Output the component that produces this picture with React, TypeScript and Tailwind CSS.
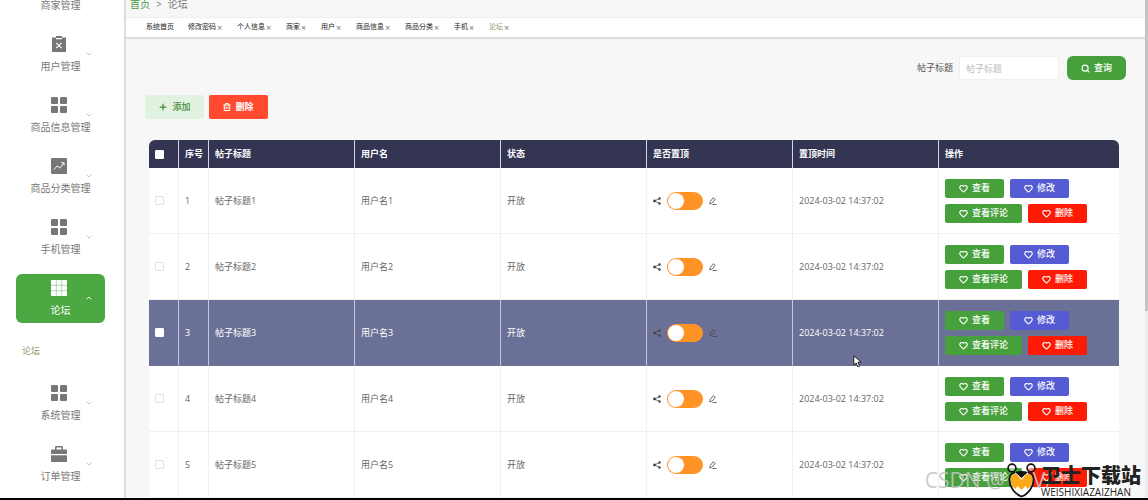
import clsx from "clsx";
import { ChevronDown, ChevronUp, Heart, Plus, Search } from "lucide-react";
import { useState, type ReactNode } from "react";

type IconName = "clipboard" | "grid" | "trend" | "table" | "case";

interface MenuItem {
	label: string;
	icon: IconName;
	children?: string[];
}

const MENU: MenuItem[] = [
	{ label: "商家管理", icon: "grid" },
	{ label: "用户管理", icon: "clipboard" },
	{ label: "商品信息管理", icon: "grid" },
	{ label: "商品分类管理", icon: "trend" },
	{ label: "手机管理", icon: "grid" },
	{ label: "论坛", icon: "table", children: ["论坛"] },
	{ label: "系统管理", icon: "grid" },
	{ label: "订单管理", icon: "case" },
];

const TABS = ["系统首页", "修改密码", "个人信息", "商家", "用户", "商品信息", "商品分类", "手机", "论坛"];

const ROWS = [1, 2, 3, 4, 5].map((id) => ({
	id,
	title: `帖子标题${id}`,
	user: `用户名${id}`,
	status: "开放",
	time: "2024-03-02 14:37:02",
}));

const HEADERS = ["序号", "帖子标题", "用户名", "状态", "是否置顶", "置顶时间", "操作"];

function MenuIcon({ name }: { name: IconName }) {
	return (
		<svg viewBox="0 0 16 16" className="h-4 w-4" fill="currentColor" aria-hidden="true">
			{name === "grid" && (
				<>
					<rect x="0" y="0" width="7" height="7" rx="1" />
					<rect x="9" y="0" width="7" height="7" rx="1" />
					<rect x="0" y="9" width="7" height="7" rx="1" />
					<rect x="9" y="9" width="7" height="7" rx="1" />
				</>
			)}
			{name === "clipboard" && (
				<>
					<path d="M1 1.5h4V0h6v1.5h4V16H1z" />
					<path d="M5 2.6h6M5.2 6.8l5.4 5.4M10.6 6.8l-5.4 5.4" stroke="#fff" strokeWidth="1.1" />
				</>
			)}
			{name === "trend" && (
				<>
					<rect width="16" height="16" rx="1" />
					<path
						d="M3 11.5l3.2-3.6 2.6 2.2 4-5M10.2 4.6l2.8.2.2 2.6"
						stroke="#fff"
						strokeWidth="1"
						fill="none"
					/>
				</>
			)}
			{name === "table" && (
				<>
					<rect width="16" height="16" />
					<path d="M5.3 0v16M10.7 0v16M0 5.3h16M0 10.7h16" stroke="#9fcf98" strokeWidth="0.8" />
				</>
			)}
			{name === "case" && (
				<>
					<path d="M4 3.5V1.2C4 .5 4.5 0 5.2 0h5.6c.7 0 1.2.5 1.2 1.2v2.3h3c.6 0 1 .4 1 1V8H0V4.5c0-.6.4-1 1-1zm1.5 0h5v-2h-5z" />
					<path d="M0 9.2h16V15c0 .6-.4 1-1 1H1c-.6 0-1-.4-1-1z" />
				</>
			)}
		</svg>
	);
}

function Sidebar() {
	return (
		<aside className="w-[126px] shrink-0 overflow-hidden border-r-2 border-[#dcdcdc] bg-white">
			<ul className="-mt-[31px] px-4 text-[10px]">
				{MENU.map((item) => {
					const open = !!item.children;
					const Chevron = open ? ChevronUp : ChevronDown;
					return (
						<li key={item.label} className={clsx(!open && "pb-3")}>
							<button
								type="button"
								className={clsx(
									"relative flex h-[49px] w-[89px] flex-col items-center gap-2 rounded-md pt-1.5",
									open ? "bg-[#4ca843] text-white" : "text-[#777]",
								)}
							>
								<span className="pr-1">
									<MenuIcon name={item.icon} />
								</span>
								<span className="leading-3 whitespace-nowrap">{item.label}</span>
								<Chevron
									className={clsx("absolute top-5 right-3 h-2 w-2", !open && "text-[#aaa]")}
									strokeWidth={open ? 3 : 2}
								/>
							</button>
							{item.children?.map((child) => (
								<a
									key={child}
									href="#forum"
									className="flex h-14 items-center pl-1.5 text-[9px] text-[#8a9a70]"
								>
									{child}
								</a>
							))}
						</li>
					);
				})}
			</ul>
		</aside>
	);
}

function TopBar() {
	return (
		<header>
			<nav className="flex h-[17px] gap-1.5 px-1 text-[10px] leading-2 text-[#777]">
				<a href="#home" className="text-[#4b9a44]">
					首页
				</a>
				<span>&gt;</span>
				<span>论坛</span>
			</nav>
			<nav className="flex h-[22px] items-center gap-3.5 border-t border-b-2 border-t-[#eee] border-b-[#dcdcdc] bg-white px-5 text-[7px] text-[#222]">
				{TABS.map((tab, i) => (
					<a
						key={tab}
						href={`#tab-${i}`}
						className={clsx(
							"flex items-center whitespace-nowrap",
							i === TABS.length - 1 && "text-[#8a9a70]",
						)}
					>
						{tab}
						{i > 0 && (
							<span className="w-[7px] text-center text-[9px] leading-none text-[#777]">×</span>
						)}
					</a>
				))}
			</nav>
		</header>
	);
}

function TrashIcon() {
	return (
		<svg viewBox="0 0 16 16" className="h-2 w-2" fill="none" stroke="currentColor" strokeWidth="2" aria-hidden="true">
			<path d="M1 4h14M5 4V1h6v3M2.5 4v11h11V4M6 7v5M10 7v5" />
		</svg>
	);
}

function ShareIcon() {
	return (
		<svg viewBox="0 0 16 16" className="h-2 w-2" fill="currentColor" aria-hidden="true">
			<path d="M13 3L3 8l10 5" fill="none" stroke="currentColor" strokeWidth="1.5" />
			<circle cx="13" cy="3" r="2.5" />
			<circle cx="3" cy="8" r="2.8" />
			<circle cx="13" cy="13" r="2.5" />
		</svg>
	);
}

function EditIcon() {
	return (
		<svg viewBox="0 0 16 16" className="h-2 w-2" fill="none" stroke="currentColor" strokeWidth="1.6" aria-hidden="true">
			<path d="M1.5 14l1-5L8.500 1.500l4 3L6.500 12zM7 15h8.500" />
		</svg>
	);
}

function ActionButton({ className, children }: { className: string; children: ReactNode }) {
	return (
		<button
			type="button"
			className={clsx(
				"flex h-[19px] items-center gap-1 rounded-xs px-3.5 font-medium whitespace-nowrap text-white",
				className,
			)}
		>
			<Heart className="h-[9px] w-[9px]" strokeWidth={3} />
			{children}
		</button>
	);
}

function CheckBox({ label, solid }: { label: string; solid: boolean }) {
	return (
		<input
			type="checkbox"
			aria-label={label}
			className={clsx(
				"block h-[9px] w-[9px] appearance-none rounded-[1px] border bg-white checked:bg-[#4ca843]",
				solid ? "border-white" : "border-[#e2e2e2]",
			)}
		/>
	);
}

function PinSwitch({ label }: { label: string }) {
	const [pinned, setPinned] = useState(false);
	return (
		<input
			type="checkbox"
			role="switch"
			aria-label={label}
			checked={pinned}
			onChange={(e) => setPinned(e.target.checked)}
			className="flex h-[18px] w-9 appearance-none rounded-full bg-[#ff9326] p-px before:h-4 before:w-4 before:rounded-full before:bg-white checked:justify-end"
		/>
	);
}

function PostTable() {
	return (
		<div className="mt-[21px] mr-[7px] ml-1 overflow-hidden rounded-t-md bg-white">
			<table className="w-full table-fixed border-separate border-spacing-0 text-left text-[9px] text-[#666]">
				<colgroup>
					<col className="w-[30px]" />
					<col className="w-[30px]" />
					<col />
					<col />
					<col />
					<col />
					<col />
					<col className="w-[180px]" />
				</colgroup>
				<thead>
					<tr className="h-7 bg-[#333552] text-white">
						<th className="border-r border-[#d5d6e4] px-1.5">
							<CheckBox label="全选" solid />
						</th>
						{HEADERS.map((h) => (
							<th
								key={h}
								className="border-r border-[#d5d6e4] pl-1.5 font-bold whitespace-nowrap last:border-r-0"
							>
								{h}
							</th>
						))}
					</tr>
				</thead>
				<tbody>
					{ROWS.map((row) => {
						const active = row.id === 3;
						const cell = clsx(
							"border-r border-b pl-1.5",
							active ? "border-r-[#c5c8dc] border-b-[#6b7196]" : "border-[#f0f0f0]",
						);
						return (
							<tr key={row.id} className={clsx("h-[66px]", active && "bg-[#6b7196] text-white")}>
								<td className={cell}>
									<CheckBox label={`选择 ${row.title}`} solid={active} />
								</td>
								<td className={cell}>{row.id}</td>
								<td className={cell}>{row.title}</td>
								<td className={cell}>{row.user}</td>
								<td className={cell}>{row.status}</td>
								<td className={cell}>
									<div className="flex items-center gap-1.5 text-[#444]">
										<ShareIcon />
										<PinSwitch label={`置顶 ${row.title}`} />
										<EditIcon />
									</div>
								</td>
								<td className={cell}>{row.time}</td>
								<td className={clsx(cell, "border-r-0")}>
									<div className="flex flex-wrap gap-1.5">
										<ActionButton className="bg-[#46a13c]">查看</ActionButton>
										<ActionButton className="bg-[#555bd2]">修改</ActionButton>
										<ActionButton className="bg-[#46a13c]">查看评论</ActionButton>
										<ActionButton className="bg-[#fd1b05]">删除</ActionButton>
									</div>
								</td>
							</tr>
						);
					})}
				</tbody>
			</table>
		</div>
	);
}

function SiteMark() {
	return (
		<div className="pointer-events-none absolute right-[7px] bottom-0 flex items-end">
			<div className="absolute right-[88px] bottom-1.5 flex gap-7 text-[21px] leading-6 whitespace-nowrap text-[#c4c4c4]/90">
				<span>CSDN @</span>
				<span>V/</span>
			</div>
			<svg viewBox="0 0 30 36" className="relative h-9 w-[30px]" aria-hidden="true">
				<path d="M2.5 17C3 12 8 10 14.5 10S26 12 26.500 17c.5 7-5 15-12 17.500C7.500 32 2 24 2.500 17z" fill="#fff" />
				<path d="M3.5 16c1-4 4-5 6-4l5 6 5-6c2-1 5 0 6 4 .5 5-2 9-5 11l-2-3-4 4-4-4-2 3c-3-2-5.500-6-5-11z" fill="#fba919" />
				<path d="M8 10c4-1.500 9-1.500 13 0l-6.500 6z" fill="#111" />
				<path
					d="M8 10.500C4 11.500 2.500 14 2.500 17c-.5 7 5 15 12 17.500 7-2.500 12.500-10.500 12-17.500 0-3-1.500-5.500-5.500-6.500"
					fill="none"
					stroke="#111"
					strokeWidth="1.800"
				/>
				<circle cx="5" cy="6" r="3.900" fill="#fff" fillOpacity="0.500" stroke="#111" strokeWidth="1.700" />
				<circle cx="24" cy="6" r="3.900" fill="#fff" fillOpacity="0.500" stroke="#111" strokeWidth="1.700" />
			</svg>
			<div className="relative ml-1 w-[100px] text-[#222]">
				<p className="text-xl leading-5 font-black whitespace-nowrap">卫士下载站</p>
				<p className="pt-0.5 pb-0.5 text-[10px] leading-2">WEISHIXIAZAIZHAN</p>
			</div>
		</div>
	);
}

export default function App() {
	return (
		<div className="relative flex h-screen overflow-hidden border-b-2 border-black bg-[#f7f7f7] font-['Open_Sans','Noto_Sans_CJK_SC',sans-serif]">
			<Sidebar />
			<main className="flex min-w-0 flex-1 flex-col">
				<TopBar />
				<section className="flex flex-col px-[19px] pt-[17px] text-[9px]">
					<form className="flex items-center justify-end" onSubmit={(e) => e.preventDefault()}>
						<label htmlFor="title" className="mr-1.5 text-[#555]">
							帖子标题
						</label>
						<input
							id="title"
							placeholder="帖子标题"
							className="mr-2 h-6 w-[100px] rounded-xs border border-[#f0f0f0] bg-white px-1.5 placeholder:text-[#bbb]"
						/>
						<button
							type="submit"
							className="flex h-6 w-[59px] items-center justify-center gap-1 rounded-md bg-[#46a13c] font-medium text-white"
						>
							<Search className="h-[9px] w-[9px]" strokeWidth={3} />
							查询
						</button>
					</form>
					<div className="mt-[15px] flex gap-[5px]">
						<button
							type="button"
							className="flex h-6 w-[59px] items-center justify-center gap-1 rounded-xs bg-[#e1f3e0] font-medium text-[#3f8a38]"
						>
							<Plus className="h-2.5 w-2.5" strokeWidth={3} />
							添加
						</button>
						<button
							type="button"
							className="flex h-6 w-[59px] items-center justify-center gap-1 rounded-xs bg-[#ff4a30] font-bold text-white"
						>
							<TrashIcon />
							删除
						</button>
					</div>
					<PostTable />
				</section>
			</main>
			<div className="w-[3px] shrink-0 bg-[#eee]">
				<div className="h-[311px] bg-[#c4c4c4]" />
			</div>
			<SiteMark />
			<svg viewBox="0 0 12 18" className="pointer-events-none absolute top-[355px] left-[853px] h-[13px] w-[9px]" aria-hidden="true">
				<path d="M1 1v13l3.2-3 2.3 5.5 2.4-1L6.6 10H11z" fill="#fff" stroke="#111" strokeWidth="1.2" />
			</svg>
		</div>
	);
}
